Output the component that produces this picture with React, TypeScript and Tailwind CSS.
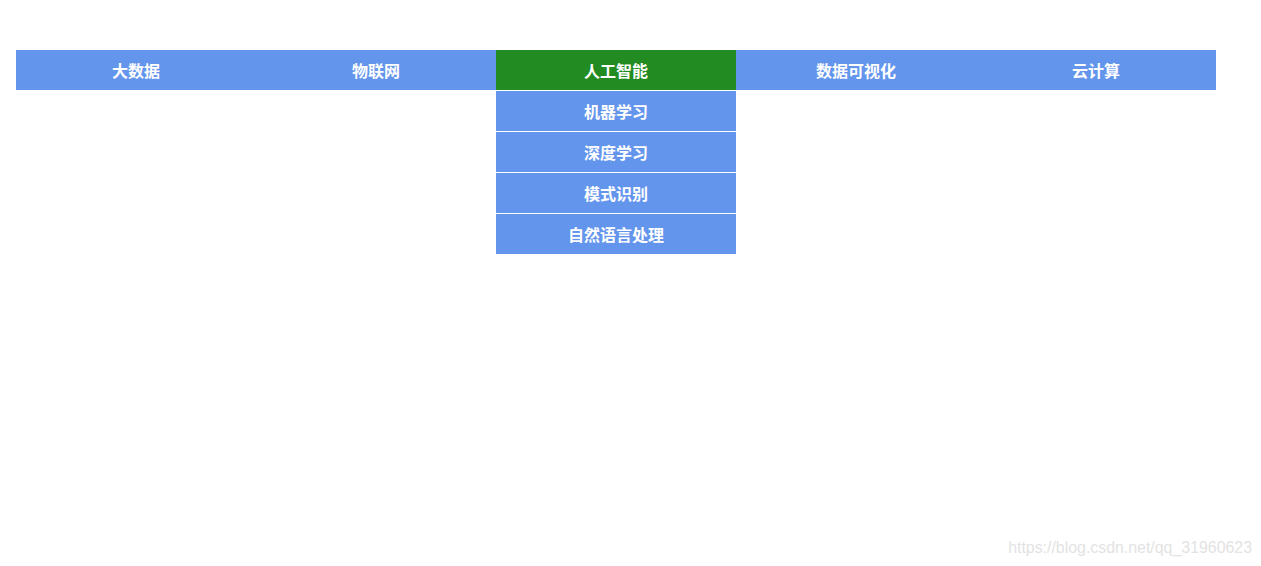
const menus = [
  { title: '大数据', items: [] as string[] },
  { title: '物联网', items: [] as string[] },
  { title: '人工智能', items: ['机器学习', '深度学习', '模式识别', '自然语言处理'], active: true },
  { title: '数据可视化', items: [] as string[] },
  { title: '云计算', items: [] as string[] },
]

export default function App() {
  return (
    <div
      className="relative h-[566px] w-full bg-white"
      style={{ fontFamily: '"Microsoft YaHei", "Noto Sans CJK SC", sans-serif' }}
    >
      <ul className="ml-4 flex w-[1200px] pt-[50px]">
        {menus.map((m) => (
          <li key={m.title} className="w-[240px]">
            <div
              className={`flex h-10 items-center justify-center text-base font-bold text-white ${
                m.active ? 'bg-[#228b22]' : 'bg-[#6495ed]'
              }`}
            >
              {m.title}
            </div>
            {m.items.length > 0 && (
              <ul className="flex flex-col">
                {m.items.map((it) => (
                  <li
                    key={it}
                    className="mt-px flex h-10 items-center justify-center bg-[#6495ed] text-base font-bold text-white"
                  >
                    {it}
                  </li>
                ))}
              </ul>
            )}
          </li>
        ))}
      </ul>
      <div
        className="absolute bottom-[6px] right-[9px] text-[15.9px] text-[#e3e3e3]"
        style={{ fontFamily: '"Liberation Sans", Arial, sans-serif' }}
      >
        https://blog.csdn.net/qq_31960623
      </div>
    </div>
  )
}
